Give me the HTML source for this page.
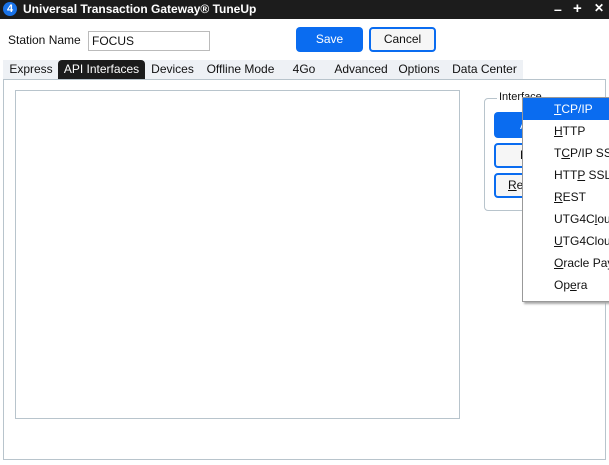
<!DOCTYPE html>
<html><head><style>
*{box-sizing:border-box;margin:0;padding:0}
body{width:609px;height:465px;background:#fff;font-family:"Liberation Sans",sans-serif;font-size:12px;color:#111;position:relative;overflow:hidden}
.a{position:absolute;white-space:nowrap}
.title{left:0;top:0;width:609px;height:19px;background:#1c1c1c;color:#fff;font-weight:bold;font-size:12px}
.tab{top:60px;height:19px;background:#eef1f5;line-height:19px;font-size:12px;text-align:center;border-radius:4px 4px 0 0}
.btn{border-radius:4px;text-align:center;font-size:12px}
.mi{left:554px;font-size:12px;height:22px;line-height:22px}
</style></head><body>
<div class="a title">
 <div class="a" style="left:3px;top:2px;width:14px;height:14px;border-radius:7px;background:#1a73e8;text-align:center;line-height:14px;font-size:11px">4</div>
 <div class="a" style="left:23px;top:2px">Universal Transaction Gateway® TuneUp</div>
 <div class="a" style="left:554px;top:1px;font-size:14px">–</div>
 <div class="a" style="left:573px;top:0px;font-size:15px">+</div>
 <div class="a" style="left:594px;top:1px;font-size:12px">✕</div>
</div>
<div class="a" style="left:8px;top:33px">Station Name</div>
<div class="a" style="left:88px;top:31px;width:122px;height:20px;border:1px solid #bbb;padding:2px 3px">FOCUS</div>
<div class="a btn" style="left:296px;top:27px;width:67px;height:25px;background:#0a6cf0;color:#fff;line-height:25px">Save</div>
<div class="a btn" style="left:369px;top:27px;width:67px;height:25px;border:2px solid #0a6cf0;background:#f6f6f6;line-height:21px">Cancel</div>
<div class="a" style="left:3px;top:60px;width:520px;height:19px;background:#eef1f5"></div>
<div class="a tab" style="left:5px;width:52px">Express</div>
<div class="a tab" style="left:58px;width:87px;background:#1c1c1c;color:#fff">API Interfaces</div>
<div class="a tab" style="left:146px;width:53px">Devices</div>
<div class="a tab" style="left:200px;width:81px">Offline Mode</div>
<div class="a tab" style="left:288px;width:32px">4Go</div>
<div class="a tab" style="left:330px;width:62px">Advanced</div>
<div class="a tab" style="left:394px;width:50px">Options</div>
<div class="a tab" style="left:448px;width:73px">Data Center</div>
<div class="a" style="left:3px;top:79px;width:603px;height:381px;border:1px solid #b8c4cc"></div>
<div class="a" style="left:15px;top:90px;width:445px;height:329px;border:1px solid #b8c4cc"></div>
<div class="a" style="left:484px;top:98px;width:130px;height:113px;border:1px solid #b8c4cc;border-radius:4px"></div>
<div class="a" style="left:497px;top:91px;background:#fff;padding:0 2px;font-size:11px">Interface</div>
<div class="a btn" style="left:494px;top:112px;width:60px;height:26px;background:#0a6cf0;color:#fff;line-height:26px">A</div>
<div class="a btn" style="left:494px;top:143px;width:60px;height:25px;border:2px solid #0a6cf0;background:#f6f6f6;line-height:21px">E</div>
<div class="a btn" style="left:494px;top:173px;width:60px;height:25px;border:2px solid #0a6cf0;background:#f6f6f6;line-height:21px;text-align:left;padding-left:12px"><u>R</u>e</div>
<div class="a" style="left:522px;top:97px;width:92px;height:205px;background:#fff;border:1px solid #999;box-shadow:2px 2px 2px #aaa"></div>
<div class="a" style="left:523px;top:98px;width:86px;height:22px;background:#0a6cf0"></div>
<div class="a mi" style="top:98px;color:#fff"><u>T</u>CP/IP</div>
<div class="a mi" style="top:120px"><u>H</u>TTP</div>
<div class="a mi" style="top:142px">T<u>C</u>P/IP SSL</div>
<div class="a mi" style="top:164px">HTT<u>P</u> SSL</div>
<div class="a mi" style="top:186px"><u>R</u>EST</div>
<div class="a mi" style="top:208px">UTG4C<u>l</u>oud</div>
<div class="a mi" style="top:230px"><u>U</u>TG4Cloud</div>
<div class="a mi" style="top:252px"><u>O</u>racle Pay</div>
<div class="a mi" style="top:274px">Op<u>e</u>ra</div>
</body></html>
